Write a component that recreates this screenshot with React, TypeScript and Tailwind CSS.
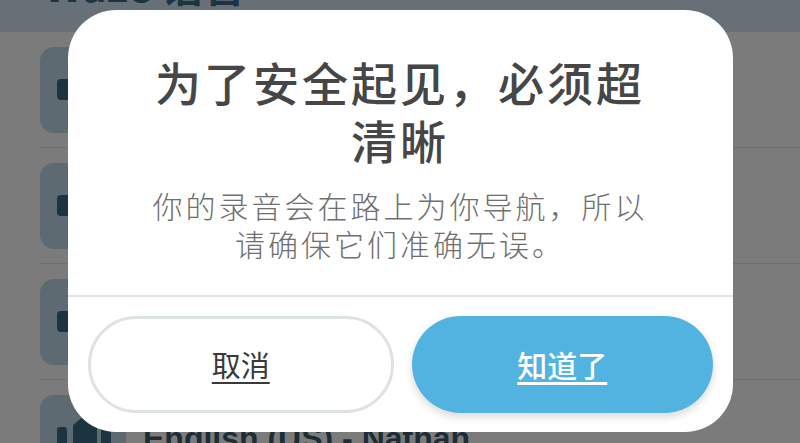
import React from "react";

const cjk = { fontFamily: '"Noto Sans CJK SC", "Noto Sans", sans-serif' };

function RowIcon({ kind }: { kind: "box" | "bars" }) {
  return (
    <div className="w-[86px] h-[86px] shrink-0 rounded-[14px] bg-[#5e6a72] flex items-center pl-[17px]">
      {kind === "box" ? (
        <div className="w-[40px] h-[21px] rounded-[4px] bg-[#1c3440]" />
      ) : (
        <svg width="56" height="50" viewBox="0 0 56 50">
          <rect x="0" y="14" width="10" height="36" rx="3" fill="#1c3440" />
          <path d="M16 12 L28 2 L40 12 V50 H16 Z" fill="#1c3440" />
          <rect x="44" y="14" width="10" height="36" rx="3" fill="#1c3440" />
        </svg>
      )}
    </div>
  );
}

function VoiceRow({ name, kind }: { name: string; kind: "box" | "bars" }) {
  return (
    <div className="h-[116px] ml-[40px] border-b border-[#6f6f6f] flex items-center gap-[17px]">
      <RowIcon kind={kind} />
      <span
        className="text-[32px] font-bold text-[#1d2c35] whitespace-nowrap"
        style={{ fontFamily: '"Liberation Sans", Arial, sans-serif' }}
      >
        {name}
      </span>
    </div>
  );
}

export default function App() {
  return (
    <div className="relative w-[800px] h-[443px] overflow-hidden bg-[#7b7b7b]">
      {/* dimmed screen behind the dialog */}
      <div className="h-[32px] bg-[#687077] overflow-hidden pl-[44px]">
        <div
          className="-mt-[37px] text-[42px] leading-[42px] font-bold text-[#1c3442] whitespace-nowrap"
          style={cjk}
        >
          Waze 语音
        </div>
      </div>
      <div>
        <VoiceRow name="普通话 - 小美" kind="box" />
        <VoiceRow name="普通话 - 小明" kind="box" />
        <VoiceRow name="粤语 - 阿文" kind="box" />
        <VoiceRow name="English (US) - Nathan" kind="bars" />
      </div>

      {/* dialog */}
      <div className="absolute inset-0 flex justify-center pt-[10px]">
        <div className="w-[665px] h-[422px] bg-white rounded-[48px] flex flex-col" style={cjk}>
          <div className="px-[70px] pt-[42px] text-center">
            <h1 className="text-[46px] leading-[58px] tracking-[3px] font-medium text-[#464646]">
              为了安全起见，必须超清晰
            </h1>
            <p className="mt-[18px] text-[30px] leading-[38px] tracking-[3px] font-light text-[#6f6f6f]">
              你的录音会在路上为你导航，所以请确保它们准确无误。
            </p>
          </div>
          <div className="mt-[33px] h-[2px] bg-[#e2e2e2]" />
          <div className="flex gap-[18px] px-[20px] pt-[19px]">
            <button className="flex-1 h-[97px] rounded-full border-[3px] border-[#dde3e3] bg-white text-[29px] text-[#3a3a3a] underline underline-offset-[5px]">
              取消
            </button>
            <button className="flex-1 h-[97px] rounded-full bg-[#52b3e1] text-[30px] font-medium text-white underline underline-offset-[5px] shadow-[0_4px_8px_rgba(0,0,0,0.15)]">
              知道了
            </button>
          </div>
        </div>
      </div>
    </div>
  );
}
